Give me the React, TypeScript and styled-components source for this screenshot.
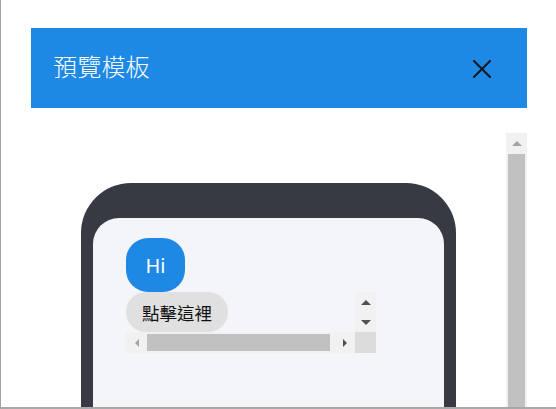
import React from "react";
import styled, { createGlobalStyle, css } from "styled-components";

const GlobalStyle = createGlobalStyle`
  html, body {
    margin: 0;
    padding: 0;
    background: #ffffff;
    overflow: hidden;
  }
  * { box-sizing: border-box; }
`;

const Page = styled.div`
  width: 556px;
  height: 409px;
  border-left: 1px solid #a3a3a3;
  border-bottom: 2px solid #a8a8a8;
  padding: 28px 29px 0 30px;
  overflow: hidden;
  background: #ffffff;
  font-family: "Noto Sans", "Noto Sans CJK TC", sans-serif;
`;

const Modal = styled.div`
  display: flex;
  flex-direction: column;
  width: 496px;
`;

const Header = styled.div`
  height: 80px;
  background: #1e88e5;
  display: flex;
  align-items: center;
  justify-content: space-between;
  padding: 2px 36px 0 22px;
`;

const Title = styled.h1`
  margin: 0 0 6px 0;
  font-family: "Noto Sans CJK TC", sans-serif;
  font-weight: 300;
  font-size: 24px;
  line-height: 1;
  color: #ffffff;
  letter-spacing: 0.2px;
`;

const CloseButton = styled.button`
  width: 18px;
  height: 18px;
  padding: 0;
  border: none;
  background: transparent;
  display: flex;
  cursor: pointer;
`;

const Body = styled.div`
  display: flex;
  padding-top: 25px;
  height: 300px;
`;

const Content = styled.div`
  flex: 1;
  padding: 50px 0 0 50px;
`;

const Phone = styled.div`
  width: 375px;
  height: 320px;
  background: #373a42;
  border-radius: 50px 50px 0 0;
  padding: 35px 12px 0 12px;
`;

const Screen = styled.div`
  height: 100%;
  background: #f4f5f9;
  border-radius: 26px 26px 0 0;
  padding: 20px 0 0 33px;
  display: flex;
  flex-direction: column;
  align-items: flex-start;
`;

const HiBubble = styled.div`
  width: 59px;
  height: 54px;
  border-radius: 22px;
  background: #1e88e5;
  color: #ffffff;
  font-family: "Noto Sans", sans-serif;
  font-size: 20px;
  display: flex;
  align-items: center;
  justify-content: center;
`;

const ScrollBox = styled.div`
  display: grid;
  grid-template-columns: 229px 21px;
  grid-template-rows: 40px 21px;
`;

const ScrollView = styled.div`
  overflow: hidden;
`;

const TextBubble = styled.div`
  width: 102px;
  height: 40px;
  border-radius: 20px;
  background: #e0e0e0;
  color: #111111;
  font-family: "Noto Sans CJK TC", sans-serif;
  font-size: 17.5px;
  display: flex;
  align-items: center;
  padding-left: 16px;
  white-space: nowrap;
`;

const VTrack = styled.div`
  background: #f1f1f1;
  display: flex;
  flex-direction: column;
  width: 21px;
`;

const HTrack = styled.div`
  background: #f1f1f1;
  display: flex;
  height: 21px;
`;

const ArrowCell = styled.div<{ $w?: number; $h?: number }>`
  width: ${(p) => p.$w ?? 21}px;
  height: ${(p) => p.$h ?? 21}px;
  flex: none;
  display: flex;
  align-items: center;
  justify-content: center;
`;

type Dir = "up" | "down" | "left" | "right";

const Arrow = styled.span<{ $dir: Dir; $color: string; $size?: number }>`
  width: 0;
  height: 0;
  display: block;
  ${({ $dir, $color, $size = 5 }) => {
    const s = $size;
    switch ($dir) {
      case "up":
        return css`
          border-left: ${s}px solid transparent;
          border-right: ${s}px solid transparent;
          border-bottom: ${s}px solid ${$color};
        `;
      case "down":
        return css`
          border-left: ${s}px solid transparent;
          border-right: ${s}px solid transparent;
          border-top: ${s}px solid ${$color};
        `;
      case "left":
        return css`
          border-top: ${s}px solid transparent;
          border-bottom: ${s}px solid transparent;
          border-right: ${s}px solid ${$color};
        `;
      default:
        return css`
          border-top: ${s}px solid transparent;
          border-bottom: ${s}px solid transparent;
          border-left: ${s}px solid ${$color};
        `;
    }
  }}
`;

const HThumb = styled.div`
  flex: 1;
  margin: 2px 4px 2px 0;
  background: #c1c1c1;
`;

const VThumb = styled.div`
  flex: 1;
  margin: 0 2px;
  background: #c1c1c1;
`;

const Corner = styled.div`
  background: #dcdcdc;
`;

const MainScrollbar = styled.div`
  width: 21px;
  background: #f1f1f1;
  display: flex;
  flex-direction: column;
`;

const CloseIcon = () => (
  <svg width="18" height="18" viewBox="0 0 18 18">
    <path d="M1 1 L17 17 M17 1 L1 17" stroke="#16161e" strokeWidth="2" strokeLinecap="square" />
  </svg>
);

export default function App() {
  return (
    <>
      <GlobalStyle />
      <Page>
        <Modal>
          <Header>
            <Title>預覽模板</Title>
            <CloseButton aria-label="close">
              <CloseIcon />
            </CloseButton>
          </Header>
          <Body>
            <Content>
              <Phone>
                <Screen>
                  <HiBubble>Hi</HiBubble>
                  <ScrollBox>
                    <ScrollView>
                      <TextBubble>點擊這裡</TextBubble>
                    </ScrollView>
                    <VTrack>
                      <ArrowCell $h={20}>
                        <Arrow $dir="up" $color="#505050" />
                      </ArrowCell>
                      <ArrowCell $h={20}>
                        <Arrow $dir="down" $color="#505050" />
                      </ArrowCell>
                    </VTrack>
                    <HTrack>
                      <ArrowCell>
                        <Arrow $dir="left" $color="#a3a3a3" $size={4.5} />
                      </ArrowCell>
                      <HThumb />
                      <ArrowCell>
                        <Arrow $dir="right" $color="#505050" $size={4.5} />
                      </ArrowCell>
                    </HTrack>
                    <Corner />
                  </ScrollBox>
                </Screen>
              </Phone>
            </Content>
            <MainScrollbar>
              <ArrowCell>
                <Arrow $dir="up" $color="#a3a3a3" $size={5} />
              </ArrowCell>
              <VThumb />
            </MainScrollbar>
          </Body>
        </Modal>
      </Page>
    </>
  );
}
